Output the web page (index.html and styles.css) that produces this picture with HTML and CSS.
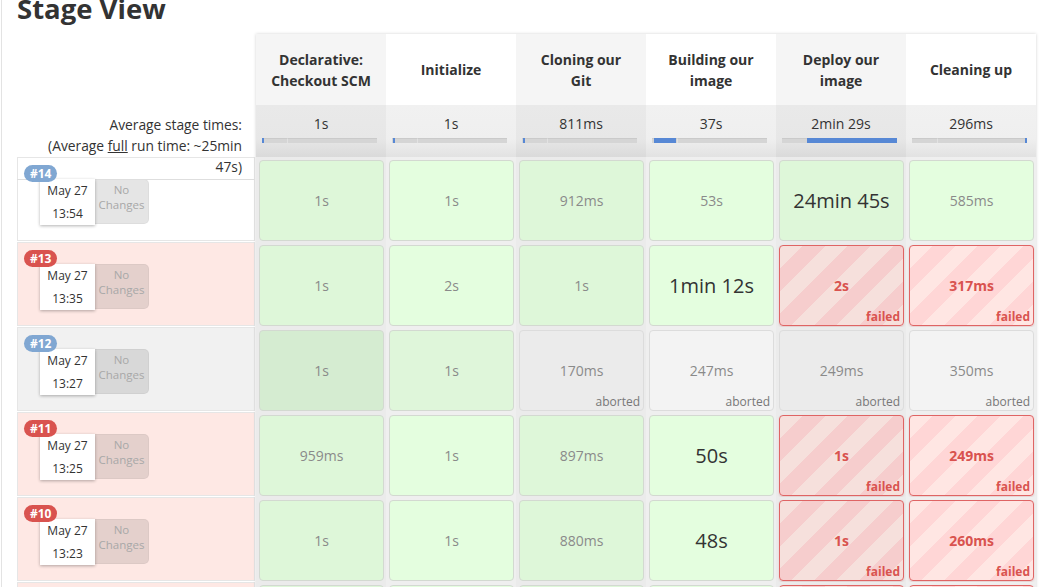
FILE: index.html
```html
<!DOCTYPE html>
<html>
<head>
<meta charset="utf-8">
<title>Stage View</title>
<link rel="stylesheet" href="styles.css">
</head>
<body>
<div class="page">
  <h2 class="title">Stage View</h2>
  <div class="stage-view">
    <div class="builds">
      <div class="avg-head">
        <p class="avg-text">Average stage times:<br>(Average <u>full</u> run time: ~25min<br>47s)</p>
      </div>
      <div class="build ok">
        <span class="badge blue">#14</span>
        <div class="meta"><div class="date">May 27<br>13:54</div><div class="changes">No<br>Changes</div></div>
      </div>
      <div class="build failed">
        <span class="badge red">#13</span>
        <div class="meta"><div class="date">May 27<br>13:35</div><div class="changes">No<br>Changes</div></div>
      </div>
      <div class="build aborted">
        <span class="badge blue">#12</span>
        <div class="meta"><div class="date">May 27<br>13:27</div><div class="changes">No<br>Changes</div></div>
      </div>
      <div class="build failed">
        <span class="badge red">#11</span>
        <div class="meta"><div class="date">May 27<br>13:25</div><div class="changes">No<br>Changes</div></div>
      </div>
      <div class="build failed">
        <span class="badge red">#10</span>
        <div class="meta"><div class="date">May 27<br>13:23</div><div class="changes">No<br>Changes</div></div>
      </div>
      <div class="build failed"></div>
    </div>

    <div class="stages">
      <div class="th odd">Declarative:<br>Checkout SCM</div>
      <div class="th">Initialize</div>
      <div class="th odd">Cloning our<br>Git</div>
      <div class="th">Building our<br>image</div>
      <div class="th odd">Deploy our<br>image</div>
      <div class="th">Cleaning up</div>

      <div class="avg odd"><div>1s</div><div class="bar"><div class="fill" style="margin-left:0%;width:2px"></div></div></div>
      <div class="avg"><div>1s</div><div class="bar"><div class="fill" style="margin-left:0.5%;width:2px"></div></div></div>
      <div class="avg odd"><div>811ms</div><div class="bar"><div class="fill" style="margin-left:1%;width:2px"></div></div></div>
      <div class="avg"><div>37s</div><div class="bar"><div class="fill" style="margin-left:1.5%;width:19.5%"></div></div></div>
      <div class="avg odd"><div>2min 29s</div><div class="bar"><div class="fill" style="margin-left:21.5%;width:78.5%"></div></div></div>
      <div class="avg"><div>296ms</div><div class="bar"><div class="fill" style="margin-left:calc(100% - 2px);width:2px"></div></div></div>

      <!-- #14 -->
      <div class="td odd"><div class="cell ok odd"><span class="time">1s</span></div></div>
      <div class="td"><div class="cell ok"><span class="time">1s</span></div></div>
      <div class="td odd"><div class="cell ok odd"><span class="time">912ms</span></div></div>
      <div class="td"><div class="cell ok"><span class="time">53s</span></div></div>
      <div class="td odd"><div class="cell ok odd big"><span class="time">24min 45s</span></div></div>
      <div class="td"><div class="cell ok"><span class="time">585ms</span></div></div>

      <!-- #13 -->
      <div class="td odd"><div class="cell ok odd"><span class="time">1s</span></div></div>
      <div class="td"><div class="cell ok"><span class="time">2s</span></div></div>
      <div class="td odd"><div class="cell ok odd"><span class="time">1s</span></div></div>
      <div class="td"><div class="cell ok big"><span class="time">1min 12s</span></div></div>
      <div class="td odd"><div class="cell fail odd"><span class="time">2s</span><span class="label">failed</span></div></div>
      <div class="td"><div class="cell fail"><span class="time">317ms</span><span class="label">failed</span></div></div>

      <!-- #12 -->
      <div class="td odd"><div class="cell ok odd dim"><span class="time">1s</span></div></div>
      <div class="td"><div class="cell ok dim"><span class="time">1s</span></div></div>
      <div class="td odd"><div class="cell abort odd"><span class="time">170ms</span><span class="label">aborted</span></div></div>
      <div class="td"><div class="cell abort"><span class="time">247ms</span><span class="label">aborted</span></div></div>
      <div class="td odd"><div class="cell abort odd"><span class="time">249ms</span><span class="label">aborted</span></div></div>
      <div class="td"><div class="cell abort"><span class="time">350ms</span><span class="label">aborted</span></div></div>

      <!-- #11 -->
      <div class="td odd"><div class="cell ok odd"><span class="time">959ms</span></div></div>
      <div class="td"><div class="cell ok"><span class="time">1s</span></div></div>
      <div class="td odd"><div class="cell ok odd"><span class="time">897ms</span></div></div>
      <div class="td"><div class="cell ok big"><span class="time">50s</span></div></div>
      <div class="td odd"><div class="cell fail odd"><span class="time">1s</span><span class="label">failed</span></div></div>
      <div class="td"><div class="cell fail"><span class="time">249ms</span><span class="label">failed</span></div></div>

      <!-- #10 -->
      <div class="td odd"><div class="cell ok odd"><span class="time">1s</span></div></div>
      <div class="td"><div class="cell ok"><span class="time">1s</span></div></div>
      <div class="td odd"><div class="cell ok odd"><span class="time">880ms</span></div></div>
      <div class="td"><div class="cell ok big"><span class="time">48s</span></div></div>
      <div class="td odd"><div class="cell fail odd"><span class="time">1s</span><span class="label">failed</span></div></div>
      <div class="td"><div class="cell fail"><span class="time">260ms</span><span class="label">failed</span></div></div>

      <!-- next build row: only its top edge is in view -->
      <div class="td odd"><div class="cell ok odd"></div></div>
      <div class="td"><div class="cell ok"></div></div>
      <div class="td odd"><div class="cell ok odd"></div></div>
      <div class="td"><div class="cell ok"></div></div>
      <div class="td odd"><div class="cell fail odd"></div></div>
      <div class="td"><div class="cell fail"></div></div>
    </div>
  </div>
</div>
</body>
</html>
```

FILE: styles.css
```css
html, body {
  margin: 0;
  padding: 0;
  background: #fff;
}

body {
  font-family: "Open Sans", "Noto Sans", "DejaVu Sans", sans-serif;
  color: #333;
  overflow: hidden;
  height: 587px;
}

.page {
  margin-left: 1px;
  border-left: 1px solid #e3e3e3;
  padding-left: 15px;
  height: 100%;
  overflow: hidden;
}

.title {
  margin: -6px 0 10px;
  font-size: 27.5px;
  line-height: 30px;
  font-weight: bold;
  color: #333;
}

.stage-view {
  display: flex;
  align-items: flex-start;
}

.builds {
  width: 239px;
  flex: none;
  display: flex;
  flex-direction: column;
}

.avg-head {
  height: 123px;
  box-sizing: border-box;
  padding-top: 80px;
}

.avg-text {
  position: relative;
  z-index: 1;
  margin: 0 1px 0 0;
  padding: 0 13px 2px 0;
  text-align: right;
  font-size: 13.8px;
  line-height: 21px;
  color: #333;
  border-bottom: 1px solid #dedede;
}

.build {
  width: 238px;
  height: 84px;
  margin-bottom: 1px;
  flex: none;
  box-sizing: border-box;
  border: 1px solid #e6e6e6;
  padding: 7px 0 0 6px;
  display: flex;
  flex-direction: column;
  align-items: flex-start;
}

.build.ok { background: #fff; }
.build.failed { background: #fee8e4; }
.build.aborted { background: #f1f1f1; }

.badge {
  position: relative;
  z-index: 2;
  height: 17px;
  line-height: 17px;
  padding: 0 6px;
  margin-bottom: -3px;
  border-radius: 9px;
  font-size: 12px;
  font-weight: bold;
  color: #fff;
}

.badge.blue { background: #80a7d2; }
.badge.red { background: #d9534f; }

.meta {
  display: flex;
  margin-left: 16px;
}

.date {
  position: relative;
  z-index: 1;
  width: 55px;
  height: 46px;
  background: #fff;
  box-shadow: 0 1px 3px rgba(0, 0, 0, 0.3);
  text-align: center;
  font-size: 12px;
  line-height: 23px;
  color: #333;
}

.changes {
  width: 54px;
  height: 45px;
  box-sizing: border-box;
  padding-top: 2px;
  background: rgba(0, 0, 0, 0.1);
  border: 1px solid rgba(0, 0, 0, 0.04);
  border-left: none;
  border-radius: 0 5px 5px 0;
  text-align: center;
  font-size: 11.5px;
  line-height: 15px;
  color: #a8a8a8;
}

.stages {
  display: grid;
  grid-template-columns: repeat(6, 130px);
  grid-template-rows: 71px 52px repeat(6, 85px);
  box-shadow: 0 0 3px rgba(0, 0, 0, 0.18);
}

.th {
  display: flex;
  align-items: center;
  justify-content: center;
  text-align: center;
  font-size: 14px;
  line-height: 21px;
  font-weight: bold;
  color: #333;
  background: #fff;
}

.th.odd { background: #f5f5f5; }

.avg {
  box-sizing: border-box;
  padding-top: 9px;
  text-align: center;
  font-size: 14px;
  line-height: 20px;
  color: #333;
  background: linear-gradient(#f1f1f1, #efefef 65%, #e2e2e2);
}

.avg.odd {
  background: linear-gradient(#e9e9e9, #e7e7e7 65%, #dadada);
}

.bar {
  display: flex;
  height: 5px;
  margin: 4px 9px 0 6px;
  background: linear-gradient(to right, #d5d5d5 0 25px, #e2e2e2 25px 26px, #d5d5d5 26px);
  box-shadow: inset 0 1px 0 rgba(0, 0, 0, 0.05);
}

.fill {
  height: 100%;
  background: #5788d5;
}

.td {
  padding: 3px 2px 1px 3px;
  background: #efefef;
}

.td.odd { background: #ebebeb; }

.cell {
  height: 100%;
  box-sizing: border-box;
  border: 1px solid #d3d9d1;
  border-radius: 4px;
  display: grid;
  grid-template-rows: 1fr auto 1fr;
  justify-items: center;
  align-items: center;
  font-size: 14px;
  color: #8a8a8a;
}

.cell .time { grid-row: 2; }

.cell .label {
  grid-row: 3;
  align-self: end;
  justify-self: end;
  padding: 0 3px 1px 0;
  font-size: 12px;
  line-height: 14px;
}

.cell.ok { background: #e4fedf; }
.cell.ok.odd { background: #def7d9; }
.cell.ok.dim { background: #dff6da; }
.cell.ok.odd.dim { background: #d5ecd1; }

.cell.big .time {
  font-size: 20px;
  color: #333;
}

.cell.fail {
  border-color: #df6464;
  color: #d9534f;
  font-weight: bold;
  background: repeating-linear-gradient(135deg, #ffe6e3 0 16px, #ffd6d6 16px 32px);
  box-shadow: 0 1px 2px rgba(200, 60, 60, 0.2);
}

.cell.fail.odd {
  background: repeating-linear-gradient(135deg, #f6e0dc 0 16px, #f6cdcd 16px 32px);
}

.cell.abort {
  border-color: #dcdcdc;
  background: #f3f3f3;
}

.cell.abort.odd { background: #ebebeb; }

.cell.abort .label { color: #777; }
```
